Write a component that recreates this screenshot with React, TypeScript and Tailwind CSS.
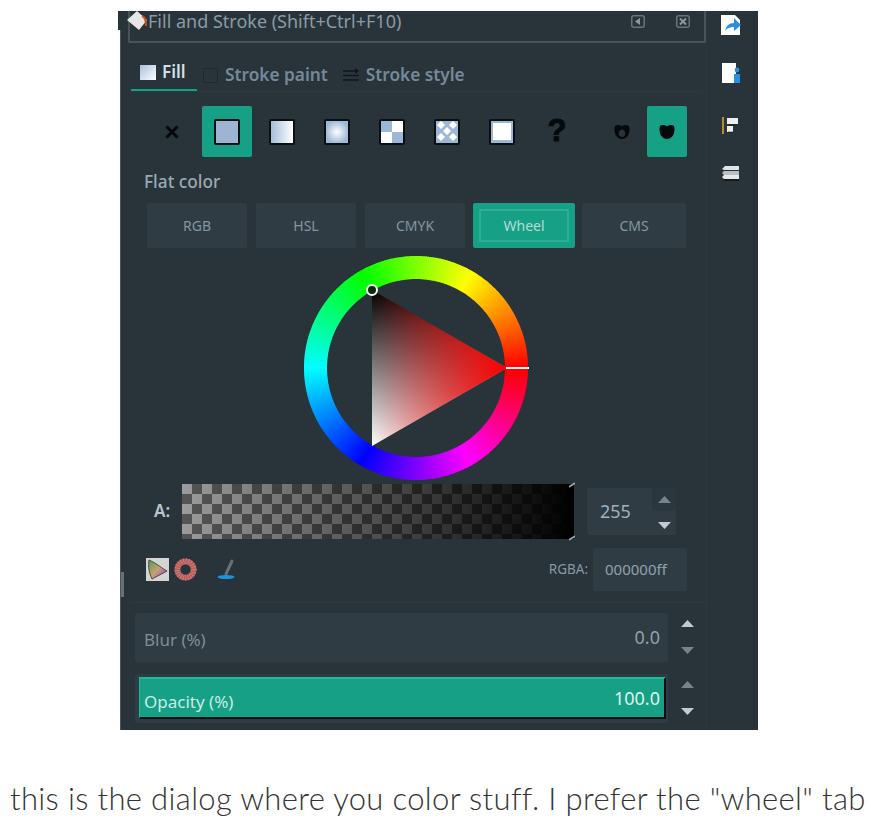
import { ReactNode } from "react";

const Up = ({ className }: { className: string }) => (
  <svg width="13" height="7" viewBox="0 0 13 7" className={className}>
    <path d="M6.5 0 13 7H0z" fill="currentColor" />
  </svg>
);

const Down = ({ className }: { className: string }) => (
  <svg width="13" height="7" viewBox="0 0 13 7" className={className}>
    <path d="M0 0h13L6.5 7z" fill="currentColor" />
  </svg>
);

const Swatch = ({ className }: { className: string }) => (
  <span className={`block w-[26px] h-[26px] border-2 border-[#0b0f12] rounded-[2px] ${className}`} />
);

const PaintSlot = ({ children, active, width = "w-[50px]" }: { children: ReactNode; active?: boolean; width?: string }) => (
  <div className={`${width} h-[51px] shrink-0 flex items-center justify-center rounded-[2px] ${active ? "bg-[#16a085]" : ""}`}>
    {children}
  </div>
);

const ModeTab = ({ label, active, width }: { label: string; active?: boolean; width: string }) =>
  active ? (
    <div className={`${width} h-[45px] p-[6px] bg-[#16a085] rounded-[2px]`}>
      <div className="h-full border-2 border-[#2eae95] flex items-center justify-center text-[14px] text-[#b5dcd3]">{label}</div>
    </div>
  ) : (
    <div className={`${width} h-[45px] bg-[#2f3c44] rounded-[2px] flex items-center justify-center text-[14px] text-[#8496a1]`}>{label}</div>
  );

const hues = Array.from({ length: 360 }, (_, i) => i);

const ColorWheel = () => {
  const cx = 113;
  const cy = 113;
  const r = 100.5;
  return (
    <svg width="226" height="226" viewBox="0 0 226 226" className="block">
      <defs>
        <linearGradient id="tri-v" x1="0" y1="0" x2="0" y2="1">
          <stop offset="0" stopColor="#000" />
          <stop offset="1" stopColor="#fff" />
        </linearGradient>
        <linearGradient id="tri-h" x1="0" y1="0" x2="1" y2="0">
          <stop offset="0" stopColor="#ff0000" stopOpacity="0" />
          <stop offset="1" stopColor="#ff0000" stopOpacity="1" />
        </linearGradient>
      </defs>
      {hues.map((h) => {
        const a0 = ((h - 0.7) * Math.PI) / 180;
        const a1 = ((h + 0.7) * Math.PI) / 180;
        return (
          <path
            key={h}
            d={`M${cx + r * Math.cos(a0)} ${cy - r * Math.sin(a0)}A${r} ${r} 0 0 0 ${cx + r * Math.cos(a1)} ${cy - r * Math.sin(a1)}`}
            stroke={`hsl(${h} 100% 50%)`}
            strokeWidth="23"
            fill="none"
          />
        );
      })}
      <path d="M69 35 204 113 69 191z" fill="url(#tri-v)" />
      <path d="M69 35 204 113 69 191z" fill="url(#tri-h)" />
      <line x1="203" y1="113" x2="226" y2="113" stroke="#fff" strokeWidth="2" />
      <circle cx="69" cy="35" r="5" fill="#0d2a10" stroke="#fff" strokeWidth="2" />
    </svg>
  );
};

const DockIcons = () => (
  <div className="w-[51px] shrink-0 flex flex-col items-center pt-[3px] pr-[3px] gap-[20px]">
    <svg width="22" height="22" viewBox="0 0 22 22">
      <path d="M1 1h14l5 5v15H1z" fill="#fff" />
      <path d="M5 17c1-5 4-8 9-8V4l7 7-7 6v-4c-4 0-7 1-9 4z" fill="#2a8fe0" />
    </svg>
    <svg width="20" height="22" viewBox="0 0 20 22" className="mt-[6px]">
      <path d="M1 1h14v20H1z" fill="#fff" />
      <circle cx="16" cy="8" r="2.4" fill="#2a8fe0" />
      <path d="M13 12h6v9h-6z" fill="#2a8fe0" />
    </svg>
    <svg width="18" height="18" viewBox="0 0 18 18" className="mt-[13px]">
      <path d="M0 0h2v17H0z" fill="#b98a35" />
      <path d="M5 1h11v6H5zM5 9h6v6H5z" fill="#eceff1" />
      <path d="M6 8h9M6 15h5" stroke="#111" strokeWidth="1" opacity=".5" />
    </svg>
    <svg width="20" height="17" viewBox="0 0 20 17" className="mt-[11px]">
      <path d="M1 3 4 0h14v4H3z" fill="#dfe3e5" />
      <path d="M1 7l2-2h15v4H3z" fill="#b9bfc2" />
      <path d="M1 11l2-2h15v4H3z" fill="#e6e9ea" />
      <path d="M3 13h15v2H3z" fill="#111" opacity=".7" />
    </svg>
  </div>
);

export default function App() {
  return (
    <div className="w-[871px] h-[821px] bg-white overflow-hidden pt-[11px] font-['Noto_Sans',sans-serif]">
      <div className="relative ml-[120px] w-[638px] h-[719px] flex bg-[#28333a]">
        <div className="absolute -left-[2px] top-0 w-[2px] h-[19px] bg-[#28333a]" />
        <div className="absolute left-0 top-[19px] bottom-0 w-[1px] bg-[#4b565c]" />
        <div className="absolute left-[1px] top-[561px] w-[3px] h-[25px] bg-[#66727a]" />
        <div className="w-[587px] shrink-0 border-r border-[#2c373e]">
          {/* titlebar */}
          <div className="relative ml-[8px] h-[32px] border-l-2 border-r-2 border-b-2 border-[#46535b] rounded-b-[2px] flex items-start pl-[18px]">
            <svg width="21" height="20" viewBox="0 0 21 20" className="absolute -left-[3px] top-0">
              <path d="M10 0 20 9l-8 10L0 9z" fill="#e6e6e6" />
              <path d="M15 5c3 1 4 4 4 10" stroke="#c8501e" strokeWidth="2" fill="none" />
            </svg>
            <span className="text-[18px] leading-[21px] text-[#8a9ba6] whitespace-nowrap">Fill and Stroke (Shift+Ctrl+F10)</span>
            <div className="ml-auto mr-[14px] mt-[4px] flex gap-[31px]">
              <svg width="14" height="13" viewBox="0 0 14 13">
                <rect x=".75" y=".75" width="12.5" height="11.5" rx="2" fill="none" stroke="#66747c" strokeWidth="1.5" />
                <path d="M9 3v7L4 6.5z" fill="#8b98a0" />
              </svg>
              <svg width="14" height="13" viewBox="0 0 14 13">
                <rect x=".75" y=".75" width="12.5" height="11.5" rx="2" fill="none" stroke="#66747c" strokeWidth="1.5" />
                <path d="M4 3.5l6 6M10 3.5l-6 6" stroke="#8b98a0" strokeWidth="2" />
              </svg>
            </div>
          </div>

          {/* tabs */}
          <div className="ml-[11px] mr-[3px] h-[49px] pt-[17px] flex items-start border-b border-[#2d383f]">
            <div className="w-[66px] h-[31px] border-b-2 border-[#16a085] flex items-start pl-[9px] gap-[6px]">
              <span className="block mt-[5px] w-[16px] h-[15px] bg-gradient-to-br from-[#a9c0dc] to-white" />
              <span className="text-[17px] leading-[24px] font-semibold text-[#d6dfe4]">Fill</span>
            </div>
            <div className="ml-[6px] flex items-start pt-[2px] gap-[7px]">
              <span className="block mt-[6px] w-[15px] h-[15px] border border-[#1f282e] rounded-[1px]" />
              <span className="text-[17.25px] leading-[25px] font-semibold text-[#76899a]">Stroke paint</span>
            </div>
            <div className="ml-[15px] flex items-start pt-[2px] gap-[7px]">
              <svg width="16" height="15" viewBox="0 0 16 15" className="mt-[6px]">
                <path d="M0 3h13M0 7.5h16M0 12h16" stroke="#10161a" strokeWidth="1.5" />
                <path d="M12 0l4 3-4 3z" fill="#10161a" />
              </svg>
              <span className="text-[17.25px] leading-[25px] font-semibold text-[#76899a]">Stroke style</span>
            </div>
          </div>

          {/* paint type */}
          <div className="ml-[27px] mt-[14px] flex items-center gap-[5px]">
            <PaintSlot>
              <svg width="14" height="14" viewBox="0 0 14 14">
                <path d="M1.5 1.5l11 11M12.5 1.5l-11 11" stroke="#06090b" strokeWidth="3" />
              </svg>
            </PaintSlot>
            <PaintSlot active>
              <Swatch className="bg-[#9db5d3]" />
            </PaintSlot>
            <PaintSlot>
              <Swatch className="bg-gradient-to-r from-[#a6bdd9] to-white" />
            </PaintSlot>
            <PaintSlot>
              <Swatch className="bg-[radial-gradient(circle,#ffffff_0%,#9db8d6_75%)]" />
            </PaintSlot>
            <PaintSlot>
              <span className="w-[26px] h-[26px] border-2 border-[#0b0f12] rounded-[2px] grid grid-cols-2 grid-rows-2">
                <span className="bg-[#9db8d6]" />
                <span className="bg-white" />
                <span className="bg-white" />
                <span className="bg-[#9db8d6]" />
              </span>
            </PaintSlot>
            <PaintSlot>
              <svg width="26" height="26" viewBox="0 0 26 26">
                <rect width="26" height="26" rx="2" fill="#0b0f12" />
                <rect x="2" y="2" width="22" height="22" fill="#9db8d6" />
                <path d="M7 2l4 4-4 4-4-4zM19 2l4 4-4 4-4-4zM13 8l4 4-4 4-4-4zM7 14l4 4-4 4-4-4zM19 14l4 4-4 4-4-4z" fill="#fff" />
              </svg>
            </PaintSlot>
            <PaintSlot>
              <span className="block w-[26px] h-[26px] border-2 border-[#0b0f12] rounded-[2px] bg-[#9db8d6] pr-[2px] pb-[3px] pl-[2px] pt-[2px]">
                <span className="block h-full bg-white" />
              </span>
            </PaintSlot>
            <PaintSlot>
              <span className="font-['Liberation_Sans',sans-serif] font-bold text-[31px] leading-none text-[#06090b] [-webkit-text-stroke:1px_#06090b] -mt-[3px]">?</span>
            </PaintSlot>
            <PaintSlot width="w-[40px] ml-[15px]">
              <svg width="16" height="16" viewBox="0 0 16 16">
                <path d="M8 2.5C9.5 1 13 .5 15 2c1 3 .5 7-1 9.5C12.5 14 10 15 8 15s-4.5-1-6-3.5C.5 9 0 5 1 2c2-1.5 5.5-1 7 .5zM8 5.5a3.2 3.8 0 1 0 .01 0z" fill="#06090b" fillRule="evenodd" />
              </svg>
            </PaintSlot>
            <PaintSlot active width="w-[40px]">
              <svg width="16" height="16" viewBox="0 0 16 16">
                <path d="M8 2.5C9.5 1 13 .5 15 2c1 3 .5 7-1 9.5C12.5 14 10 15 8 15s-4.5-1-6-3.5C.5 9 0 5 1 2c2-1.5 5.5-1 7 .5z" fill="#06090b" />
              </svg>
            </PaintSlot>
          </div>

          <div className="ml-[24px] mt-[15px] h-[20px] text-[17.25px] leading-[20px] font-medium text-[#9aa9b2]">Flat color</div>

          {/* color mode */}
          <div className="ml-[27px] mt-[11px] flex gap-[9px]">
            <ModeTab label="RGB" width="w-[100px]" />
            <ModeTab label="HSL" width="w-[100px]" />
            <ModeTab label="CMYK" width="w-[100px]" />
            <ModeTab label="Wheel" active width="w-[102px] -ml-[1px]" />
            <ModeTab label="CMS" width="w-[104px] -ml-[2px]" />
          </div>

          <div className="mt-[7px] ml-[183px]">
            <ColorWheel />
          </div>

          {/* alpha */}
          <div className="mt-[3px] flex items-start h-[55px]">
            <span className="ml-[34px] w-[28px] mt-[16px] text-[17px] leading-[22px] font-semibold text-[#b7c6d0]">A:</span>
            <div className="relative w-[392px] h-[55px] bg-[repeating-conic-gradient(#555555_0_25%,#9c9c9c_0_50%)] bg-[length:20px_20px]">
              <div className="h-full bg-gradient-to-r from-transparent to-black" />
              <span className="absolute -right-[1px] top-0 w-[6px] h-[5px] border-t-2 border-[#9aa4aa] -skew-y-[30deg]" />
              <span className="absolute -right-[1px] bottom-0 w-[6px] h-[5px] border-b-2 border-[#9aa4aa] -skew-y-[30deg]" />
            </div>
            <div className="ml-[13px] mt-[4px] w-[89px] h-[47px] bg-[#2f3c44] rounded-[2px] flex items-stretch">
              <span className="flex-1 pl-[13px] text-[18px] leading-[47px] text-[#9fb2bf]">255</span>
              <div className="w-[24px] flex flex-col items-center">
                <div className="w-full h-[23px] bg-[#2b373e] flex items-center justify-center">
                  <Up className="text-[#76858d]" />
                </div>
                <div className="flex-1 flex items-center justify-center pt-[4px]">
                  <Down className="text-[#c3cbd0]" />
                </div>
              </div>
            </div>
          </div>

          {/* color tools */}
          <div className="mt-[9px] h-[43px] flex items-start">
            <div className="ml-[26px] mt-[10px] w-[23px] h-[23px] bg-[#d4d4d4] flex items-center justify-center">
              <svg width="21" height="21" viewBox="0 0 21 21">
                <defs>
                  <linearGradient id="gamut" x1="0" y1="0" x2="1" y2="1">
                    <stop offset="0" stopColor="#4f9e52" />
                    <stop offset=".5" stopColor="#c9a070" />
                    <stop offset=".75" stopColor="#b06aa8" />
                    <stop offset="1" stopColor="#4f4a96" />
                  </linearGradient>
                </defs>
                <path d="M2 1c7 3 14 9 18 11L5 20C2 14 1 7 2 1z" fill="url(#gamut)" stroke="#4a4a4a" />
              </svg>
            </div>
            <svg width="23" height="23" viewBox="0 0 24 24" className="ml-[5px] mt-[10px]">
              <circle cx="12" cy="12" r="8.5" fill="none" stroke="#b85a58" strokeWidth="6" />
              <circle cx="12" cy="12" r="8.5" fill="none" stroke="#c47f7c" strokeWidth="6" strokeDasharray="1 1.5" />
            </svg>
            <svg width="20" height="24" viewBox="0 0 20 24" className="ml-[20px] mt-[9px]">
              <path d="M9 17 15 4" stroke="#6c6f72" strokeWidth="3" strokeLinecap="round" />
              <ellipse cx="9" cy="20" rx="8.5" ry="2" fill="#1d95dd" />
            </svg>
            <span className="ml-auto mt-[12px] text-[13.5px] leading-[18px] text-[#8798a3]">RGBA:</span>
            <div className="ml-[5px] mr-[19px] w-[94px] h-[43px] bg-[#2f3c44] rounded-[2px] pl-[12px] text-[15px] leading-[43px] text-[#8fa1ad]">000000ff</div>
          </div>

          <div className="ml-[10px] mt-[11px] border-t border-[#2d383f]" />

          {/* blur */}
          <div className="mt-[10px] ml-[15px] flex items-stretch h-[49px]">
            <div className="w-[533px] shrink-0 bg-[#2f3c44] rounded-[2px] flex justify-between pl-[9px] pr-[8px] text-[18px]">
              <span className="mt-[14px] leading-[26px] text-[17px] text-[#7d8e99]">Blur (%)</span>
              <span className="mt-[11px] leading-[26px] text-[#8fa1ad]">0.0</span>
            </div>
            <div className="w-[38px] shrink-0 flex flex-col items-center pt-[7px] gap-[20px]">
              <Up className="text-[#c3cbd0]" />
              <Down className="text-[#76858d]" />
            </div>
          </div>

          {/* opacity */}
          <div className="mt-[12px] ml-[15px] flex items-stretch h-[49px]">
            <div className="w-[533px] shrink-0 bg-[#2f3c44] rounded-[2px] pl-[4px] pr-[2px] pt-[3px]">
              <div className="h-[42px] bg-[#16a085] border-t-2 border-l border-[#1fb89b] border-b-2 border-r-2 border-b-[#0a0f12] border-r-[#0a0f12] flex justify-between pl-[4px] pr-[4px]">
                <span className="mt-[10px] leading-[26px] text-[17px] text-[#c9ece4]">Opacity (%)</span>
                <span className="mt-[6px] leading-[26px] text-[18px] text-[#dff3ee]">100.0</span>
              </div>
            </div>
            <div className="w-[38px] shrink-0 flex flex-col items-center pt-[7px] gap-[20px]">
              <Up className="text-[#76858d]" />
              <Down className="text-[#c3cbd0]" />
            </div>
          </div>
        </div>
        <DockIcons />
      </div>
      <p className="mt-[50px] ml-[10px] whitespace-nowrap font-['Lato',sans-serif] font-light text-[31px] leading-[36px] tracking-[0.35px] text-[#333]">
        this is the dialog where you color stuff. I prefer the "wheel" tab
      </p>
    </div>
  );
}
